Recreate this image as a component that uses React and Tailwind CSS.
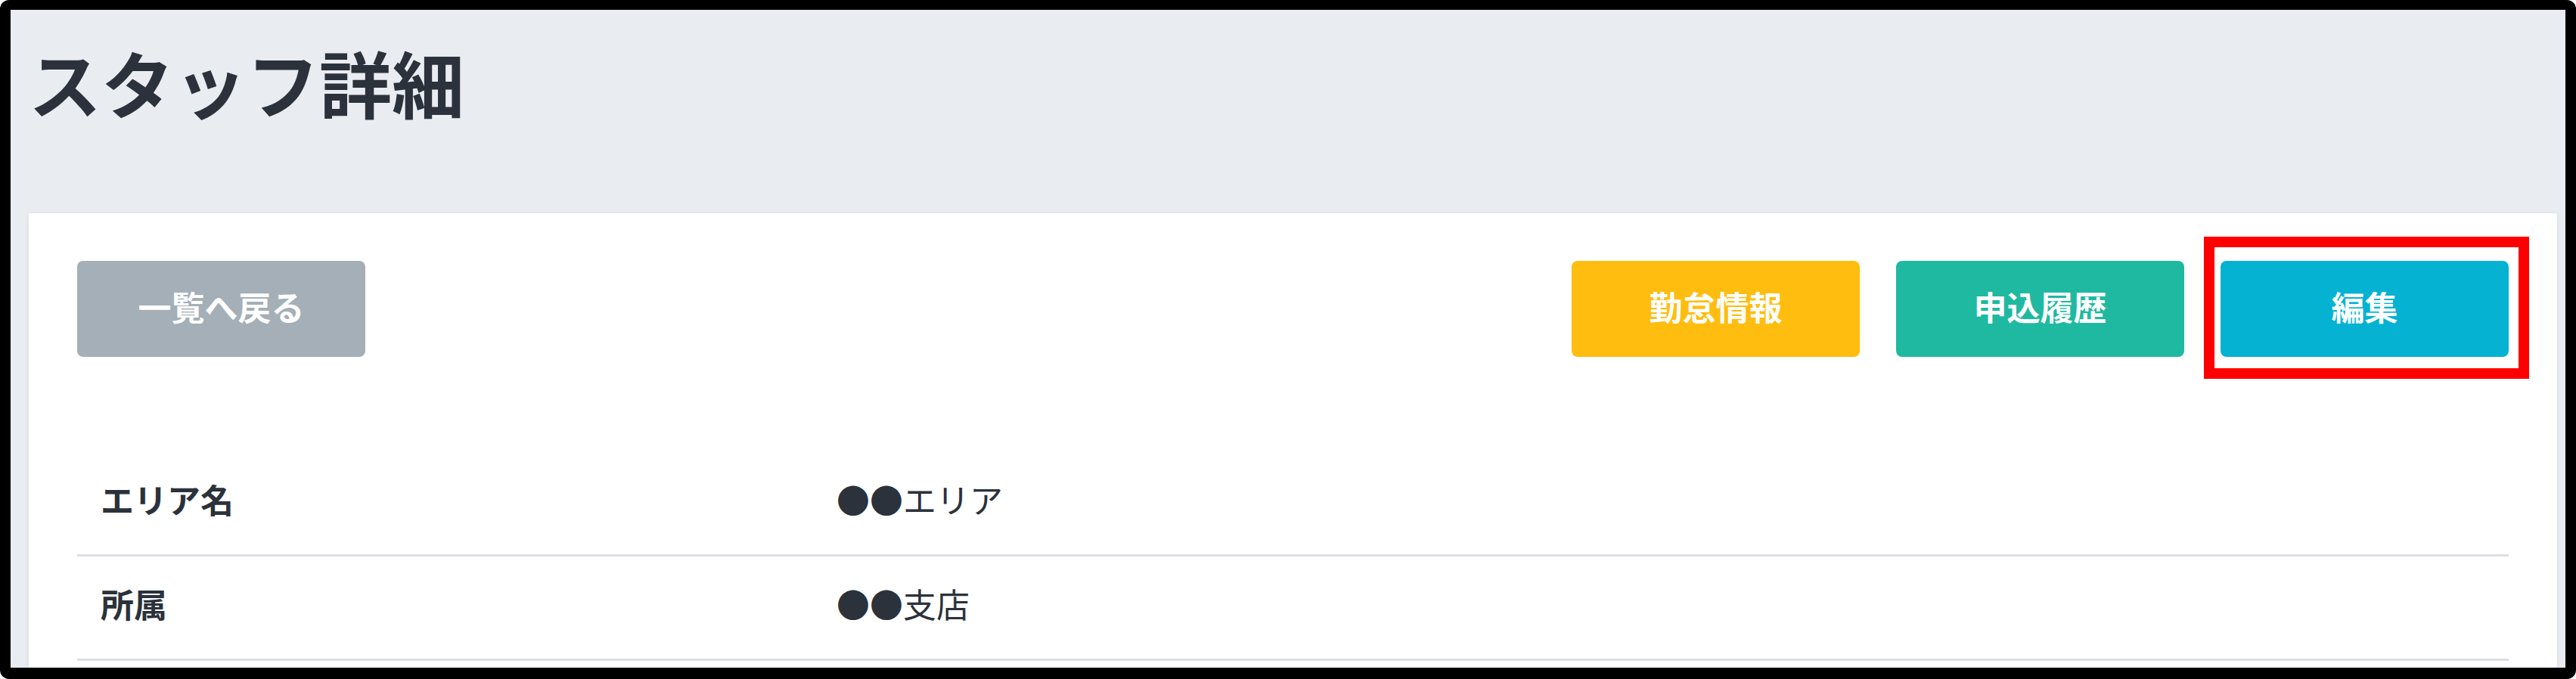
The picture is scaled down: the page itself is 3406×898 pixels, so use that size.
import React from "react";

const rows = [
  { label: "エリア名", value: "●●エリア" },
  { label: "所属", value: "●●支店" },
];

const ActionButton = ({ color, children }) => (
  <button
    className={`w-[381px] h-[127px] rounded-[8px] ${color} text-white text-[44px] font-bold leading-none flex items-center justify-center pb-[8px]`}
  >
    {children}
  </button>
);

const App = () => {
  return (
    <div
      className="w-[3406px] h-[898px] bg-black rounded-[12px] pt-[13px] px-[14px] pb-[15px]"
      style={{ fontFamily: '"Noto Sans CJK JP", "Noto Sans", sans-serif' }}
    >
      <div className="h-full bg-[#e9ecf1] overflow-hidden flex flex-col">
        <h1 className="pl-[24px] pt-[37px] mb-[117px] text-[96px] leading-[115px] font-bold text-[#2b323b]">
          スタッフ詳細
        </h1>

        <section className="ml-[24px] mr-[11px] flex-1 bg-white shadow-[0_0_6px_rgba(0,0,0,0.08)] px-[64px] pt-[63px]">
          <div className="flex justify-between items-start">
            <ActionButton color="bg-[#a4afb7]">一覧へ戻る</ActionButton>
            <div className="flex gap-[48px]">
              <ActionButton color="bg-[#ffbd0f]">勤怠情報</ActionButton>
              <ActionButton color="bg-[#1fb9a1]">申込履歴</ActionButton>
              <div className="relative">
                <ActionButton color="bg-[#05b2d2]">編集</ActionButton>
                <div className="absolute -left-[22px] -right-[27px] -top-[32px] -bottom-[29px] border-[14px] border-[#ff0000] pointer-events-none" />
              </div>
            </div>
          </div>

          <div className="mt-[126px]">
            {rows.map((row, index) => (
              <div
                key={index}
                className="flex items-center h-[138px] pb-[12px] border-b-[3px] border-[#dcdfe3] text-[44px] text-[#2b323b]"
              >
                <div className="w-[973px] pl-[31px] font-bold">{row.label}</div>
                <div className="pl-[31px]">{row.value}</div>
              </div>
            ))}
          </div>
        </section>
      </div>
    </div>
  );
};

export default App;
